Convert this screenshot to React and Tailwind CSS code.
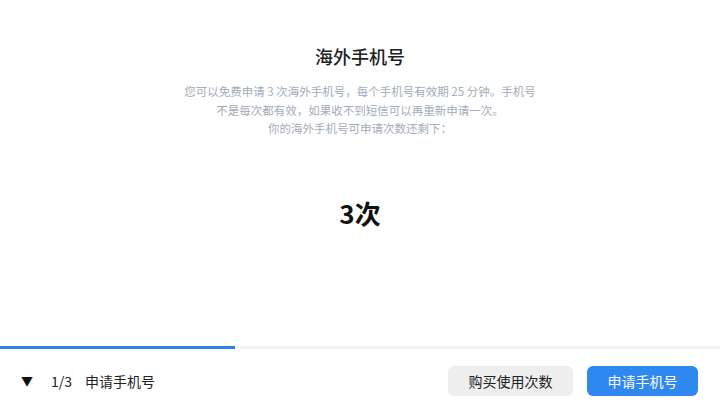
export default function App() {
  const font = { fontFamily: '"Noto Sans CJK SC", "Noto Sans", sans-serif' }

  return (
    <div className="flex h-[413px] w-[720px] flex-col bg-white" style={font}>
      {/* Content */}
      <div className="flex flex-1 flex-col items-center">
        <h1 className="mt-[43px] text-[18px] font-medium leading-[26px] text-[#222]">海外手机号</h1>
        <p className="mt-[13px] text-center text-[11.5px] leading-[18.5px] text-[#a3acb8]">
          您可以免费申请 3 次海外手机号，每个手机号有效期 25 分钟。手机号
          <br />
          不是每次都有效，如果收不到短信可以再重新申请一次。
          <br />
          你的海外手机号可申请次数还剩下：
        </p>
        <p className="mt-[58px] text-[26px] font-bold leading-[34px] text-[#111]">3次</p>
      </div>

      {/* Progress */}
      <div className="h-[3px] w-full bg-[#f2f2f2]">
        <div className="h-full w-[235px] bg-[#2f80ed]" />
      </div>

      {/* Footer */}
      <div className="flex h-[64px] items-center pl-[21px] pr-[22px]">
        <span className="text-[12px] leading-none text-[#111]">▼</span>
        <span className="ml-[18px] text-[14px] text-[#222]">1/3</span>
        <span className="ml-[13px] text-[14px] text-[#222]">申请手机号</span>
        <div className="ml-auto flex gap-[14px]">
          <button className="h-[30px] w-[125px] rounded-[6px] bg-[#eeeeee] text-[14px] text-[#222]">
            购买使用次数
          </button>
          <button className="h-[30px] w-[111px] rounded-[6px] bg-[#2f88f0] text-[14px] text-white">
            申请手机号
          </button>
        </div>
      </div>
    </div>
  )
}
